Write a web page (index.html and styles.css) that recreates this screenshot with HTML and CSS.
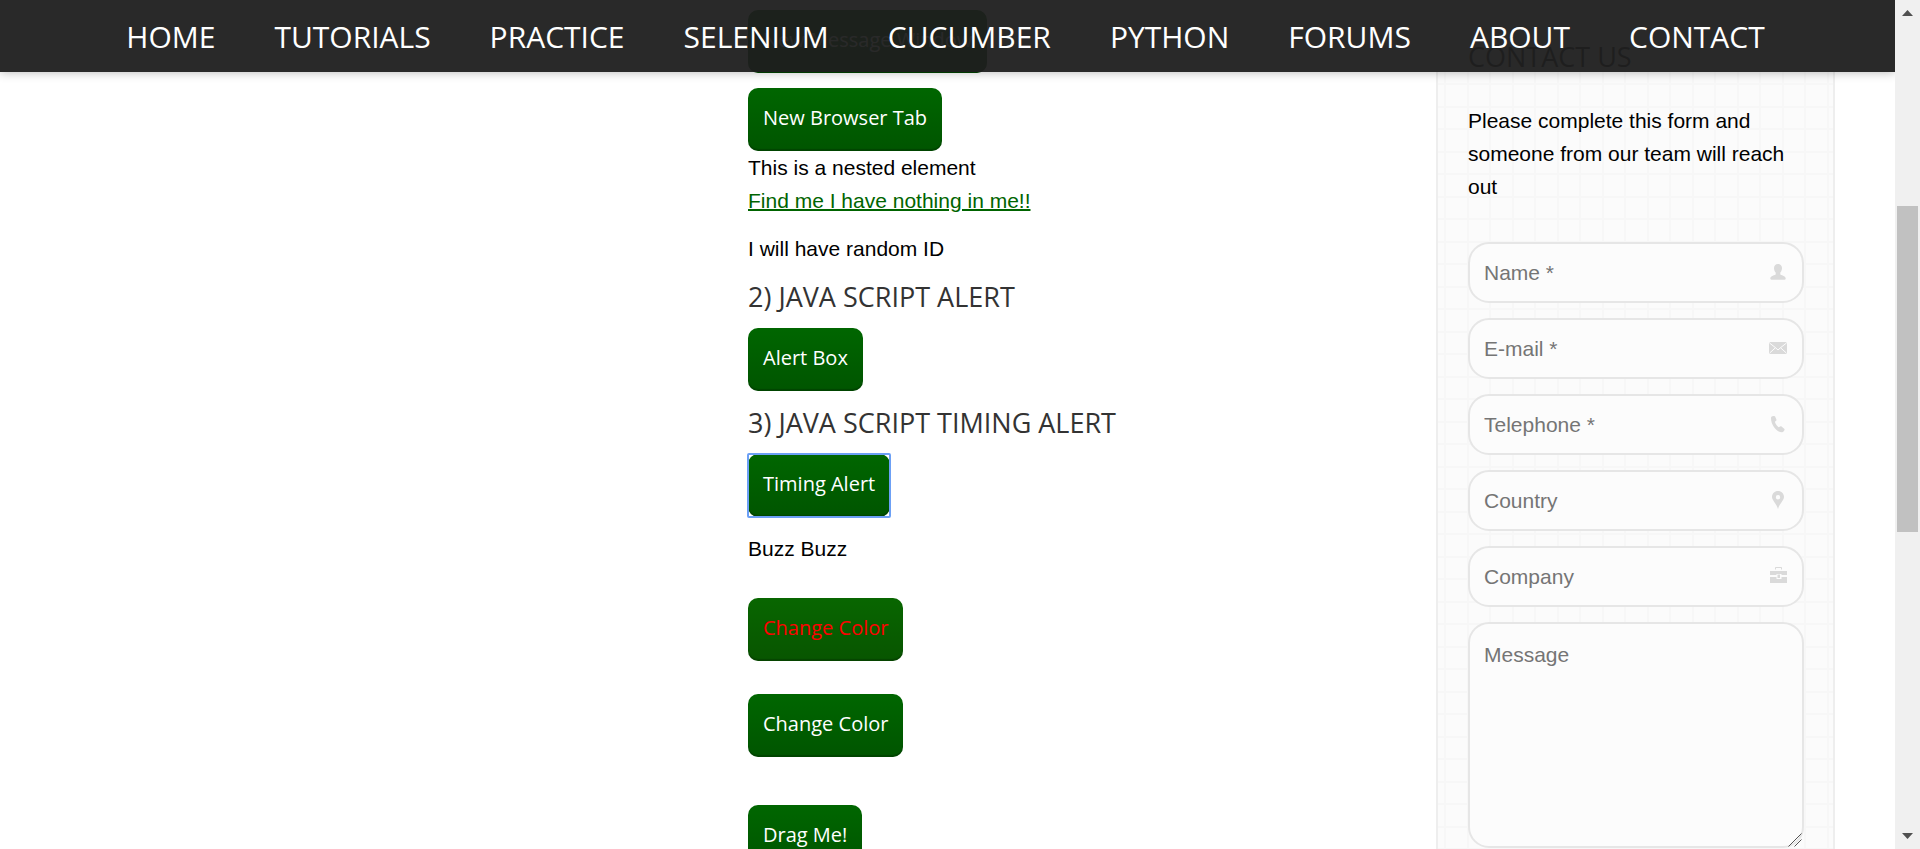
FILE: index.html
```html
<!DOCTYPE html>
<html lang="en">
<head>
<meta charset="utf-8">
<title>Automation Practice</title>
<link rel="stylesheet" href="styles.css">
</head>
<body>
<div class="viewport">
  <div class="page">
    <header class="site-header">
      <nav class="nav">
        <a href="#">HOME</a>
        <a href="#">TUTORIALS</a>
        <a href="#">PRACTICE</a>
        <a href="#">SELENIUM</a>
        <a href="#">CUCUMBER</a>
        <a href="#">PYTHON</a>
        <a href="#">FORUMS</a>
        <a href="#">ABOUT</a>
        <a href="#">CONTACT</a>
      </nav>
    </header>

    <div class="columns">
      <main class="content">
        <button class="btn" type="button">New Message Window</button>
        <button class="btn btn-tab" type="button">New Browser Tab</button>
        <div>This is a nested element</div>
        <a class="link" href="#">Find me I have nothing in me!!</a>
        <p class="text">I will have random ID</p>
        <h3 class="heading">2) JAVA SCRIPT ALERT</h3>
        <button class="btn" type="button">Alert Box</button>
        <h3 class="heading">3) JAVA SCRIPT TIMING ALERT</h3>
        <button class="btn btn-focused" type="button">Timing Alert</button>
        <p class="text">Buzz Buzz</p>
        <button class="btn btn-spaced btn-red" type="button">Change Color</button>
        <button class="btn btn-spaced" type="button">Change Color</button>
        <button class="btn btn-drag" type="button">Drag Me!</button>
      </main>

      <aside class="sidebar">
        <h3 class="sidebar-title">CONTACT US</h3>
        <p class="intro">Please complete this form and someone from our team will reach out</p>
        <form class="form">
          <div class="field">
            <input type="text" placeholder="Name *" aria-label="Name">
            <svg class="icon" viewBox="0 0 18 18"><path d="M9 1C6.500 1 5 2.700 5 5c0 1.800.6 3.500 1.700 4.500v1.700C6.300 12.300 1.300 12.600 1.300 15.500c0 .8.400 1.200 1.200 1.200h13c.8 0 1.200-.4 1.200-1.200 0-2.900-5-3.200-5.400-4.300V9.500C12.400 8.500 13 6.800 13 5c0-2.300-1.500-4-4-4z"/></svg>
          </div>
          <div class="field">
            <input type="email" placeholder="E-mail *" aria-label="E-mail">
            <svg class="icon" viewBox="0 0 18 18"><rect y="3" width="18" height="12" rx="1.500"/><path class="cut" d="M.5 4l6 4.700L9 11l2.500-2.300L17.500 4M.7 14l5.800-5.300M17.300 14l-5.800-5.300"/></svg>
          </div>
          <div class="field">
            <input type="tel" placeholder="Telephone *" aria-label="Telephone">
            <svg class="icon" viewBox="0 0 18 18"><path d="M3.300 1.200L4.900.9c.6-.1 1 .1 1.200.6l1.300 3c.2.500.1.900-.3 1.200L5.900 6.800c.5 2 1.900 4.100 3.700 5.500l1.600-.8c.5-.2.900-.2 1.300.1l2.700 2.200c.5.400.5.900.2 1.400l-.9 1.400c-.4.500-.9.700-1.500.7C7.600 17.100 2 10 2 3.200c0-1 .4-1.800 1.300-2z"/></svg>
          </div>
          <div class="field">
            <input type="text" placeholder="Country" aria-label="Country">
            <svg class="icon" viewBox="0 0 18 18"><path fill-rule="evenodd" d="M9 0C5.600 0 3 2.600 3 6c0 3.300 4.500 6.500 6 12 1.500-5.500 6-8.700 6-12 0-3.400-2.600-6-6-6zm0 4a2.200 2.200 0 1 1 0 4.400A2.200 2.200 0 0 1 9 4z"/></svg>
          </div>
          <div class="field">
            <input type="text" placeholder="Company" aria-label="Company">
            <svg class="icon" viewBox="0 0 18 18"><path d="M6 2.500V1c0-.6.400-1 1-1h5c.6 0 1 .4 1 1v1.500h-1V1H7v1.500z"/><path d="M1 4h17v4h-5.500V7h-5v1H1zM1 10h6.500v2h5v-2H18v6H1z"/><rect x="8.500" y="7.500" width="2.500" height="3.500"/></svg>
          </div>
          <div class="field">
            <textarea placeholder="Message" aria-label="Message"></textarea>
            <svg class="grip" viewBox="0 0 14 14"><path d="M.5 13.500l13-13M6.500 13.500l7-7"/></svg>
          </div>
        </form>
      </aside>
    </div>
  </div>

  <div class="scrollbar" aria-hidden="true">
    <svg class="arrow" viewBox="0 0 11 6"><path d="M5.500 0L11 6H0z"/></svg>
    <div class="track">
      <div class="thumb"></div>
    </div>
    <svg class="arrow" viewBox="0 0 11 6"><path d="M0 0h11L5.500 6z"/></svg>
  </div>
</div>
</body>
</html>
```
FILE: styles.css
```css
* {
  box-sizing: border-box;
}

body {
  margin: 0;
  background: #fff;
  color: #000;
  font: 21px/33px "Liberation Sans", Arial, sans-serif;
}

.viewport {
  display: flex;
  height: 100vh;
  overflow: hidden;
}

.page {
  position: relative;
  flex: 1;
  overflow: hidden;
}

/* Header laid over the scrolled page */
.site-header {
  position: absolute;
  top: 0;
  left: 0;
  right: 0;
  z-index: 1;
  background: rgba(29, 29, 29, 0.95);
  box-shadow: 0 0 10px rgba(0, 0, 0, 0.3);
}

.nav {
  display: flex;
  justify-content: center;
  gap: 59px;
  padding: 2px 4px 0 0;
}

.nav a {
  color: #fff;
  font: 30px/70px "Open Sans", sans-serif;
  text-decoration: none;
}

.columns {
  display: grid;
  grid-template-columns: 1fr 1fr 399px;
  padding: 0 60px;
}

.content {
  grid-column: 2;
  display: flex;
  flex-direction: column;
  align-items: flex-start;
  padding-top: 10px;
}

.btn {
  position: relative;
  height: 63px;
  padding: 0 15px 3px;
  border: 0;
  border-radius: 10px;
  background: linear-gradient(#006600, #005500);
  box-shadow: inset 0 -2px 1px rgba(0, 0, 0, 0.2);
  color: #fff;
  font: 20px/30px "Open Sans", sans-serif;
}

.btn-tab {
  margin-top: 15px;
}

/* Square focus ring around the rounded button */
.btn-focused::after {
  content: "";
  position: absolute;
  inset: -1px;
  border: 2px solid #6ca0f5;
  border-radius: 2px;
}

.btn-spaced {
  margin-top: 33px;
}

.btn-red {
  background: linear-gradient(#086600, #085500);
  color: #f00;
}

.btn-drag {
  margin-top: 48px;
}

.link {
  color: #006400;
  text-decoration-thickness: 2px;
}

.text {
  margin: 15px 0 0;
}

.heading,
.sidebar-title {
  margin: 14px 0 13px;
  color: #333;
  font: 400 27px/36px "Open Sans", sans-serif;
}

.sidebar {
  grid-column: 3;
  padding: 25px 29px 30px 30px;
  border: 2px solid #eee;
  border-width: 0 2px;
  background-color: #fbfbfb;
  background-image:
    linear-gradient(90deg, #f7f7f7 2px, transparent 2px, transparent 23px, #f7f7f7 23px, #f7f7f7 25px, transparent 25px),
    linear-gradient(#f7f7f7 2px, transparent 2px, transparent 23px, #f7f7f7 23px, #f7f7f7 25px, transparent 25px);
  background-position: 6px 38px;
  background-size: 45px 45px;
}

.intro {
  margin: 29px 0 39px;
}

.form {
  display: grid;
  gap: 15px;
}

.field {
  position: relative;
  display: grid;
}

.field input,
.field textarea {
  width: 100%;
  height: 61px;
  padding: 0 50px 0 14px;
  border: 2px solid #e6e6e6;
  border-radius: 21px;
  outline: 0;
  background: #fcfcfc;
  color: #000;
  font: 21px/33px "Liberation Sans", Arial, sans-serif;
}

.field textarea {
  height: 226px;
  padding-top: 14px;
  resize: none;
}

.field ::placeholder {
  color: #757575;
}

.icon {
  position: absolute;
  top: 21px;
  right: 17px;
  width: 18px;
  height: 18px;
  fill: #dadada;
}

.icon .cut {
  fill: none;
  stroke: #fcfcfc;
  stroke-width: 1;
}

.grip {
  position: absolute;
  right: 2px;
  bottom: 1px;
  width: 14px;
  height: 14px;
  fill: none;
  stroke: #555;
}

.scrollbar {
  display: flex;
  flex-direction: column;
  align-items: center;
  width: 25px;
  padding: 10px 2px;
  background: #f0f0f0;
}

.arrow {
  width: 11px;
  height: 6px;
  fill: #505050;
}

.track {
  flex: 1;
  display: grid;
  grid-template-rows: 181fr 326fr 292fr;
  width: 100%;
  padding: 9px 0;
}

.thumb {
  grid-row: 2;
  background: #c1c1c1;
}
```
